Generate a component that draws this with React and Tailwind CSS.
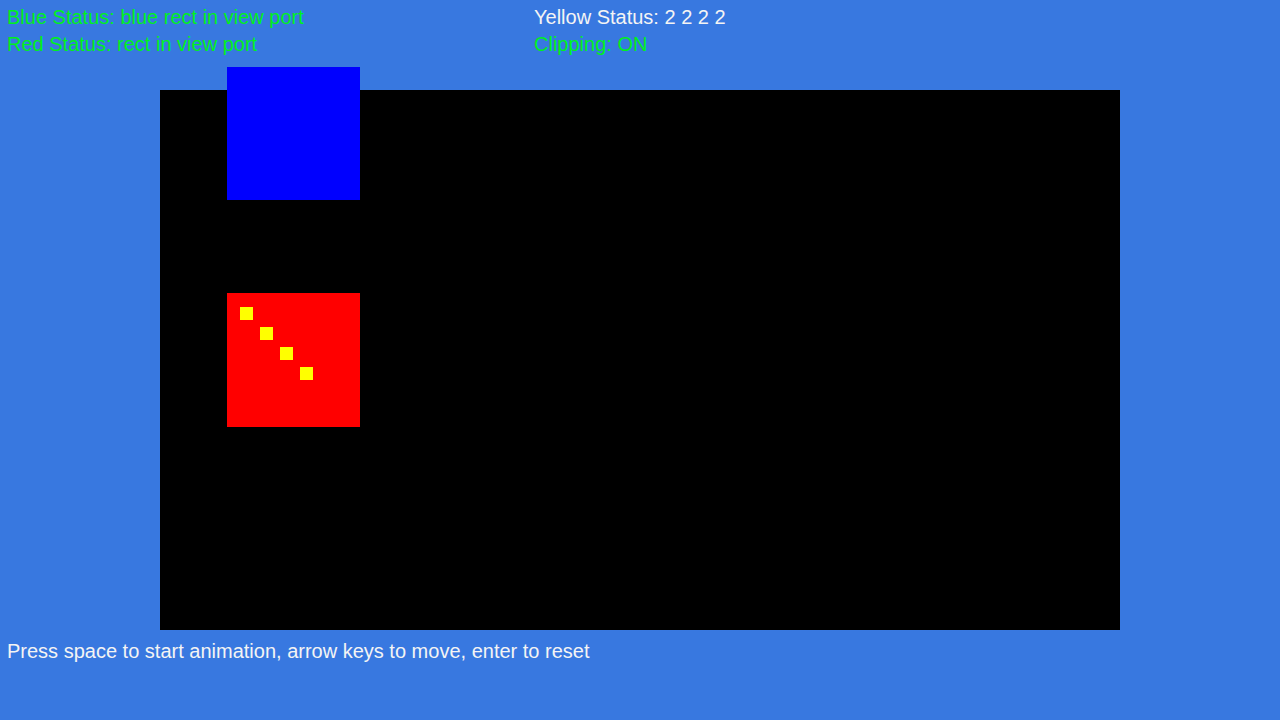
import React from 'react'

const yellowDots = [0, 1, 2, 3]

export default function App() {
  return (
    <div className="min-h-screen w-full bg-[#3878e0] font-['Liberation_Sans',Arial,sans-serif] text-[20px] leading-[27px]">
      <header className="flex pt-[4px] h-[90px]">
        <div className="w-[534px] pl-[7px]">
          <div className="text-[#00f020]">Blue Status: blue rect in view port</div>
          <div className="text-[#00f020]">Red Status: rect in view port</div>
        </div>
        <div>
          <div className="text-[#f4f4f4]">Yellow Status: 2 2 2 2</div>
          <div className="text-[#00f020]">Clipping: ON</div>
        </div>
      </header>

      {/* game viewport: the shapes sit at their own coords */}
      <div className="relative ml-[160px] w-[960px] h-[540px] bg-black">
        <div className="absolute left-[67px] top-[-23px] w-[133px] h-[133px] bg-[#0000ff]" />
        <div className="absolute left-[67px] top-[203px] w-[133px] h-[134px] bg-[#ff0000]">
          {yellowDots.map((i) => (
            <div
              key={i}
              className="absolute w-[13px] h-[13px] bg-[#ffff00]"
              style={{ left: 13 + i * 20, top: 14 + i * 20 }}
            />
          ))}
        </div>
      </div>

      <p className="mt-[8px] pl-[7px] text-[#f4f4f4]">
        Press space to start animation, arrow keys to move, enter to reset
      </p>
    </div>
  )
}
